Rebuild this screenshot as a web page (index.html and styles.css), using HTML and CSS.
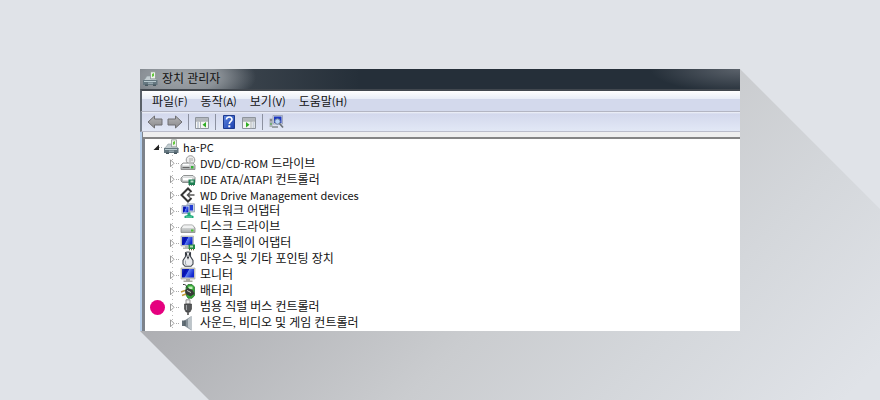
FILE: index.html
```
<!DOCTYPE html>
<html lang="ko">
<head>
<meta charset="utf-8">
<title>장치 관리자</title>
<link rel="stylesheet" href="styles.css">
</head>
<body>
<svg class="defs" aria-hidden="true">
  <defs>
    <linearGradient id="blue" x1="0" y1="0" x2="1" y2=".4"><stop offset="0" stop-color="#2238c8"/><stop offset=".3" stop-color="#0610a8"/><stop offset=".5" stop-color="#0a1cc8"/><stop offset=".56" stop-color="#5b7cf0"/><stop offset="1" stop-color="#1228d0"/></linearGradient>
    <linearGradient id="metal" x1="0" y1="0" x2="0" y2="1"><stop offset="0" stop-color="#eceeee"/><stop offset="1" stop-color="#a6aaaa"/></linearGradient>
    <linearGradient id="arrow" x1="0" y1="0" x2="0" y2="1"><stop offset="0" stop-color="#b4b4b6"/><stop offset="1" stop-color="#8a8a8c"/></linearGradient>
    <linearGradient id="help" x1="0" y1="0" x2="1" y2="1"><stop offset="0" stop-color="#5d86e0"/><stop offset="1" stop-color="#1b3fae"/></linearGradient>
  </defs>
  <symbol id="computer" viewBox="0 0 16 16">
    <path d="M8.500 .8H13.500V8H8.500z" fill="#eef2ec" stroke="#8d9890" stroke-width=".8"/><path d="M10 3l2-1v3l-2 1z" fill="#62c83c"/>
    <path d="M3 8l2-3h3.500v3H14l1.500 1.500H1z" fill="#c3cdd1" stroke="#8b989d" stroke-width=".6"/><path d="M1 9h14.500v5H1z" fill="#657780"/><path d="M2 10h12v1H2z" fill="#b8c9cf"/><path d="M6 11.500h5v1.500H6z" fill="#92a4ac"/><path d="M3 13.500h3V15H3zM11 13.500h3V15h-3z" fill="#46575f"/>
  </symbol>
  <symbol id="dvd" viewBox="0 0 16 16">
    <circle cx="10.500" cy="5" r="4.300" fill="#ececec" stroke="#9b9b9b"/><path d="M10 3v4M12 3v3" stroke="#999" stroke-width=".8"/>
    <path d="M3 8h10l2 2v4.500H1V10z" fill="url(#metal)" stroke="#808080" stroke-width=".8"/><path d="M3 9h6v1.500H3z" fill="#fff"/><path d="M2.500 12.500h7" stroke="#666"/><path d="M11 11h2.500v2.500H11z" fill="#35b335"/>
  </symbol>
  <symbol id="ide" viewBox="0 0 16 16">
    <path d="M3.500 4.500h9.500l2 2v5H2.500L1 10V7z" fill="url(#metal)" stroke="#858787" stroke-width=".9"/><path d="M3 7h9v2.500H3z" fill="#fff"/>
    <path d="M8.500 8.500H15V14H8.500z" fill="#1d7d51"/><path d="M10.500 9.500h3v2h-3z" fill="#b7dfc8"/><path d="M9.500 14v1M11.500 14v1M13.500 14v1" stroke="#888"/>
  </symbol>
  <symbol id="wd" viewBox="0 0 16 16">
    <path d="M11.500 5L8 1.500 1.500 8 8 14.500l3.500-3.500" fill="none" stroke="#333" stroke-width="2"/><path d="M14.500 8H7.500M10 5.500L7.500 8l2.500 2.500" fill="none" stroke="#555" stroke-width="1.500"/>
  </symbol>
  <symbol id="network" viewBox="0 0 16 16">
    <path d="M7 .8h7.500V9H7z" fill="#c6d0e3" stroke="#8b96ad" stroke-width=".7"/><path d="M8.500 2H13v5.500H8.500z" fill="#233ed4"/>
    <path d="M2 2.500h7.500v8H2z" fill="#dbe2ef" stroke="#8490aa" stroke-width=".7"/><path d="M3 3.500h5.500v6H3z" fill="url(#blue)"/>
    <path d="M7.500 9.500h3V12l3 1v2H4.500v-2l3-1z" fill="#19a978"/><path d="M6 13.500h6v1H6z" fill="#76d5ae"/>
  </symbol>
  <symbol id="disk" viewBox="0 0 16 16">
    <path d="M3.500 6h9L15 9v4.500H1V9z" fill="url(#metal)" stroke="#8a8c8c" stroke-width=".8"/><path d="M3.500 6.500h9L14 9H2z" fill="#f0f1f1"/><path d="M11 10.500h2.500v2H11z" fill="#49c42f"/>
  </symbol>
  <symbol id="display" viewBox="0 0 16 16">
    <path d="M1 1h12.500v10H1z" fill="#d1d3cf" stroke="#a0a29f" stroke-width=".6"/><path d="M2 2h10.500v8H2z" fill="url(#blue)"/><path d="M5 11h3v1.500h2V14H3v-1.500h2z" fill="#b6b8b4"/>
    <path d="M8.500 9.500H15V14H8.500z" fill="#238b43"/><path d="M10 10.500h3v2h-3z" fill="#b6dcae"/><path d="M9.500 14v1.300M11.500 14v1.300M13.500 14v1.300" stroke="#716632"/>
  </symbol>
  <symbol id="mouse" viewBox="0 0 16 16">
    <path d="M5.500 1.500C6 .8 10 .8 10.500 1.500v4L13 9.500V13L11 15.300H5L3 13V9.500l2.500-4z" fill="#e9ebee" stroke="#40464d" stroke-width="1.100"/><path d="M6 2l2 5 2-5" fill="none" stroke="#272d34" stroke-width="1.300"/><path d="M8 3v3" stroke="#fff"/><path d="M5.500 9.500v3.500l1 1" stroke="#a4abb3" fill="none"/>
  </symbol>
  <symbol id="monitor" viewBox="0 0 16 16">
    <path d="M1 1h14v11H1z" fill="#d1d1c7" stroke="#a3a39b" stroke-width=".6"/><path d="M2 2h12v8.500H2z" fill="url(#blue)"/><path d="M6 12h4v1.500h2.500V15h-9v-1.500H6z" fill="#aaa9a0"/>
  </symbol>
  <symbol id="battery" viewBox="0 0 16 16">
    <path d="M8 1.500h4L14.500 4v8.500L12 15.300H8L6 12V4z" fill="#35ac36" stroke="#25672b" stroke-width=".7"/><path d="M8.500 3.500h4V6h-4z" fill="#c3efba"/>
    <path d="M3 1.500C7 1 6 4 8 5.500" fill="none" stroke="#222" stroke-width=".9"/><path d="M5 7l3-2 5 2.500 1.500 3.500-4 2.500L5.500 11z" fill="#383b38"/><path d="M7 7.500l4 2" stroke="#c8cac8"/><path d="M1 9l4-1.500M2 12.500L6 11" stroke="#c49b38" stroke-width="1.500"/>
  </symbol>
  <symbol id="usb" viewBox="0 0 16 16">
    <path d="M6 .8h4V5H6z" fill="#eee" stroke="#888" stroke-width=".9"/><path d="M4.500 5h7v5L10 13H6l-1.500-3z" fill="#555759" stroke="#333" stroke-width=".6"/><path d="M6.500 6v5" stroke="#a0a2a4"/><path d="M8 13v3" stroke="#444" stroke-width="1.500"/>
  </symbol>
  <symbol id="sound" viewBox="0 0 16 16">
    <path d="M2 5.500h3v5.500H2z" fill="#647078"/><path d="M4.500 5.500L11.500 1v14.500L4.500 11z" fill="#87929a"/><path d="M8 4l3.500-3v14.500L8 12z" fill="#bcc4c9"/><path d="M5 5.500V11" stroke="#3f4a51"/>
  </symbol>
  <symbol id="closed" viewBox="0 0 8 8">
    <path d="M1.500 .8L5 4.300 1.500 7.800z" fill="#fff" stroke="#999"/>
  </symbol>
</svg>
<main class="stage">
  <section class="window">
    <header class="titlebar">
      <svg class="icon"><use href="#computer"/></svg>
      <h1 class="title">장치 관리자</h1>
    </header>
    <nav class="menubar">
      <button class="menu">파일<span class="latin">(F)</span></button>
      <button class="menu">동작<span class="latin">(A)</span></button>
      <button class="menu">보기<span class="latin">(V)</span></button>
      <button class="menu">도움말<span class="latin">(H)</span></button>
    </nav>
    <div class="toolbar">
      <button class="tool" aria-label="뒤로"><svg class="icon" viewBox="0 0 16 16"><path d="M1 8l6.500-6V5H15v6H7.500v3z" fill="url(#arrow)" stroke="#6f6f72"/></svg></button>
      <button class="tool" aria-label="앞으로"><svg class="icon" viewBox="0 0 16 16"><path d="M15 8L8.500 2V5H1v6h7.500v3z" fill="url(#arrow)" stroke="#6f6f72"/></svg></button>
      <span class="divider"></span>
      <button class="tool" aria-label="콘솔 트리"><svg class="icon" viewBox="0 0 16 16"><path d="M1.500 3.500h13v11h-13z" fill="#f5f6f3" stroke="#8e949c"/><path d="M2 4h12v2.500H2z" fill="#b4b8be"/><path d="M2 7h12" stroke="#8e949c"/><path d="M6.500 7v7.500" stroke="#abb0b5"/><path d="M3 9h2M3 11h2M3 13h2" stroke="#9cabc2"/><path d="M12 8v5.500L8.500 10.700z" fill="#2fad23"/></svg></button>
      <span class="divider"></span>
      <button class="tool" aria-label="도움말"><svg class="icon" viewBox="0 0 16 16"><path d="M2.500 1.500h11v13h-11z" fill="url(#help)" stroke="#1e3b8f"/><path d="M5.500 5.500c0-3.500 5.500-3 5.500 0C11 7.500 8.300 7.500 8.300 10" fill="none" stroke="#fff" stroke-width="1.600"/><path d="M7.300 11.300h2v2h-2z" fill="#fff"/></svg></button>
      <button class="tool" aria-label="작업 창"><svg class="icon" viewBox="0 0 16 16"><path d="M1.500 3.500h13v11h-13z" fill="#f5f6f3" stroke="#8e949c"/><path d="M2 4h12v2.500H2z" fill="#b4b8be"/><path d="M2 7h12" stroke="#8e949c"/><path d="M10 7v7.500" stroke="#abb0b5"/><path d="M11.500 9h2M11.500 11h2M11.500 13h2" stroke="#9cabc2"/><path d="M5 8v5.500l3.500-2.800z" fill="#2fad23"/></svg></button>
      <span class="divider"></span>
      <button class="tool" aria-label="하드웨어 변경 사항 검색"><svg class="icon" viewBox="0 0 16 16"><path d="M1.500 4.500h3V13h-3z" fill="#aab0b5"/><path d="M2 6h2" stroke="#666"/><path d="M2 10h2" stroke="#45a645"/><path d="M5 1.500h9.500V10H5z" fill="#d5dae5" stroke="#8994aa" stroke-width=".7"/><path d="M6 2.500h7.500v6.500H6z" fill="#1c38c0"/><circle cx="9.500" cy="7.500" r="2.700" fill="#b9d4f7" stroke="#6d7f9f"/><path d="M11.500 9.500l3.500 4" stroke="#6c7378" stroke-width="1.600"/><path d="M4 12h6v2H4z" fill="#9aa1a7"/></svg></button>
    </div>
    <div class="pane">
      <div class="row root"><button class="toggle" aria-label="접기"><svg class="arrow" viewBox="0 0 8 8"><path d="M7 1.500V7H1.500z" fill="#222"/></svg></button><svg class="icon"><use href="#computer"/></svg><span class="latin">ha-PC</span></div>
      <ul class="tree">
        <li class="row"><button class="toggle" aria-label="펼치기"><svg class="arrow"><use href="#closed"/></svg></button><svg class="icon"><use href="#dvd"/></svg><span><span class="latin">DVD/CD-ROM</span> 드라이브</span></li>
        <li class="row"><button class="toggle" aria-label="펼치기"><svg class="arrow"><use href="#closed"/></svg></button><svg class="icon"><use href="#ide"/></svg><span><span class="latin">IDE ATA/ATAPI</span> 컨트롤러</span></li>
        <li class="row"><button class="toggle" aria-label="펼치기"><svg class="arrow"><use href="#closed"/></svg></button><svg class="icon"><use href="#wd"/></svg><span class="latin">WD Drive Management devices</span></li>
        <li class="row"><button class="toggle" aria-label="펼치기"><svg class="arrow"><use href="#closed"/></svg></button><svg class="icon"><use href="#network"/></svg><span>네트워크 어댑터</span></li>
        <li class="row"><button class="toggle" aria-label="펼치기"><svg class="arrow"><use href="#closed"/></svg></button><svg class="icon"><use href="#disk"/></svg><span>디스크 드라이브</span></li>
        <li class="row"><button class="toggle" aria-label="펼치기"><svg class="arrow"><use href="#closed"/></svg></button><svg class="icon"><use href="#display"/></svg><span>디스플레이 어댑터</span></li>
        <li class="row"><button class="toggle" aria-label="펼치기"><svg class="arrow"><use href="#closed"/></svg></button><svg class="icon"><use href="#mouse"/></svg><span>마우스 및 기타 포인팅 장치</span></li>
        <li class="row"><button class="toggle" aria-label="펼치기"><svg class="arrow"><use href="#closed"/></svg></button><svg class="icon"><use href="#monitor"/></svg><span>모니터</span></li>
        <li class="row"><button class="toggle" aria-label="펼치기"><svg class="arrow"><use href="#closed"/></svg></button><svg class="icon"><use href="#battery"/></svg><span>배터리</span></li>
        <li class="row marked"><button class="toggle" aria-label="펼치기"><svg class="arrow"><use href="#closed"/></svg></button><svg class="icon"><use href="#usb"/></svg><span>범용 직렬 버스 컨트롤러</span></li>
        <li class="row"><button class="toggle" aria-label="펼치기"><svg class="arrow"><use href="#closed"/></svg></button><svg class="icon"><use href="#sound"/></svg><span>사운드, 비디오 및 게임 컨트롤러</span></li>
      </ul>
    </div>
  </section>
</main>
</body>
</html>
```
FILE: styles.css
```
*,
*::before {
  box-sizing: border-box;
}

body {
  margin: 0;
  background: #e0e3e8;
  color: #111;
  font: 12px/16px Lato, "Noto Sans CJK KR", sans-serif;
}

button {
  margin: 0;
  padding: 0;
  border: 0;
  background: none;
  color: inherit;
  font: inherit;
}

.latin {
  font-family: "Noto Sans CJK KR", sans-serif;
  font-size: 11px;
}

.defs {
  position: absolute;
  width: 0;
  height: 0;
}

.stage {
  min-height: 100vh;
  padding: 69px 140px;
  overflow: hidden;
}

.window {
  position: relative;
  z-index: 0;
}

/* Long diagonal shadow cast to the lower right. */
.window::before {
  content: "";
  position: absolute;
  z-index: -1;
  inset: 0 -331px -331px 0;
  background: linear-gradient(135deg, #adaeb2 17%, #cacccf 39%, #d4d7db 52%, #e0e3e8 68%);
  clip-path: polygon(0 calc(100% - 331px), calc(100% - 331px) 0, 100% 331px, 331px 100%);
}

.icon {
  flex: none;
  width: 16px;
  height: 16px;
}

.titlebar {
  display: flex;
  align-items: center;
  gap: 4px;
  height: 20px;
  padding: 0 2px;
  background:
    radial-gradient(ellipse 76px 30px at 40px 8px, #a0a5aa 0, #8b9197 50%, transparent 100%),
    radial-gradient(ellipse 90px 24px at 100% 0, #5b626b 0, transparent 100%),
    linear-gradient(90deg, #5c636b, #3a434c 100px, #252f39 220px);
}

.title {
  margin: 0;
  font-size: 12px;
  line-height: 16px;
  font-weight: 400;
}

.menubar {
  display: flex;
  align-items: center;
  gap: 13px;
  height: 23px;
  padding: 0 10px;
  border-top: 2px solid #42484f;
  border-left: 2px solid #596069;
  border-bottom: 1px solid #b3b5c2;
  background: linear-gradient(#fff 0, #e9eef8 8px, #d3d9ec 8px, #d3d9ec);
}

.toolbar {
  display: flex;
  align-items: center;
  gap: 4px;
  height: 20px;
  padding: 0 5px;
  border-left: 2px solid #78818d;
  border-bottom: 1px solid #bbbdcb;
  background: linear-gradient(#f0f2f8 0, #d3d8ec 2px, #e2e8f6);
}

.tool {
  display: flex;
}

.divider {
  width: 1px;
  height: 16px;
  margin: 0 1px;
  background: #8c91a0;
}

.pane {
  padding-left: 8px;
  border-left: 2px solid #b4cdea;
  background: #fff;
  box-shadow: inset 3px 0 #7d838b;
}

.pane::before {
  content: "";
  display: block;
  height: 7px;
  margin-left: -7px;
  border-bottom: 2px solid #858585;
  background: #efefef;
}

.tree {
  margin: 0;
  padding: 0 0 0 17px;
  list-style: none;
  background: repeating-linear-gradient(#bbb 0 1px, transparent 1px 4px) 22px 0 / 1px 100% no-repeat;
}

.row {
  position: relative;
  display: flex;
  align-items: center;
  height: 16px;
}

.toggle {
  display: flex;
  align-items: center;
  width: 13px;
  height: 16px;
  padding-left: 2px;
  background: repeating-linear-gradient(90deg, #aaa 0 1px, transparent 1px 2px) 9px 8px / 4px 1px no-repeat;
}

.arrow {
  width: 8px;
  height: 8px;
}

.row .icon {
  margin-right: 4px;
}

.marked::before {
  content: "";
  position: absolute;
  left: -17px;
  width: 15px;
  height: 15px;
  border-radius: 50%;
  background: #e5007f;
}
```
